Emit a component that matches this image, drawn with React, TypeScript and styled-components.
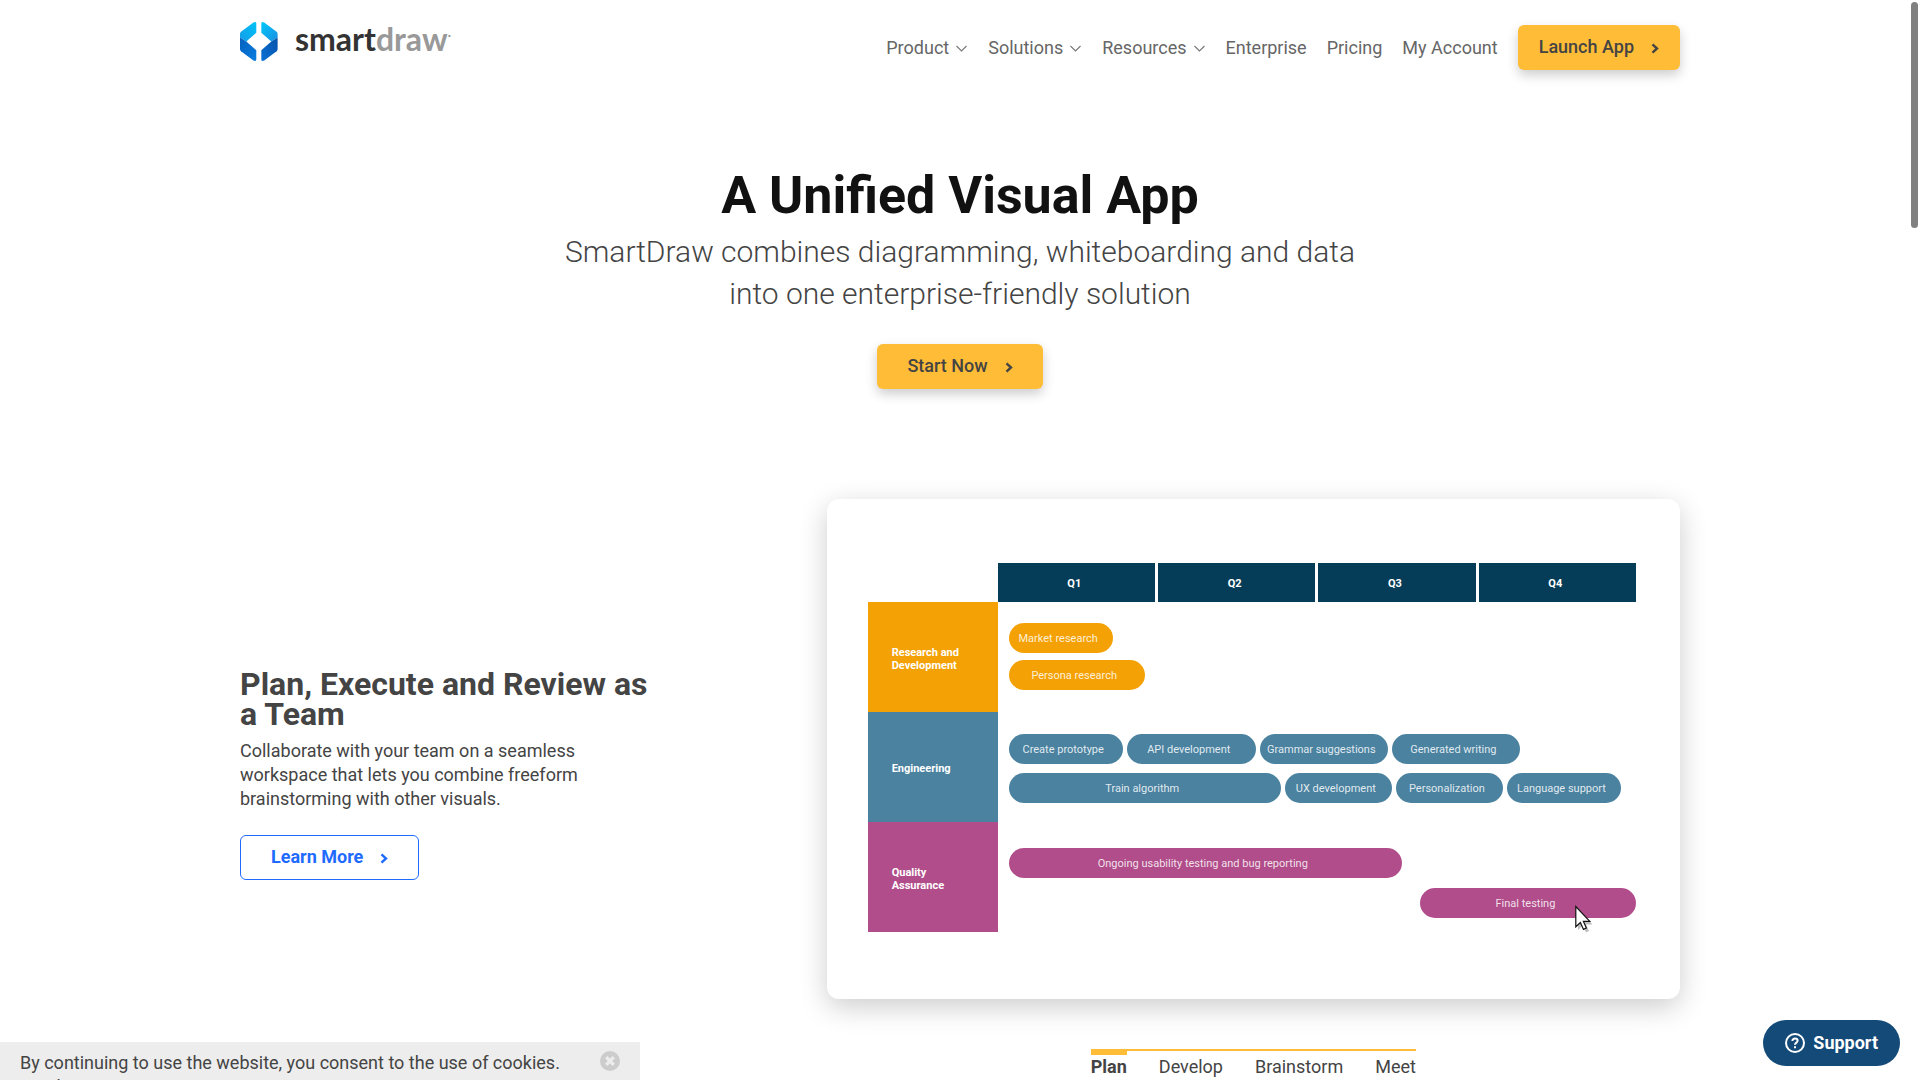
import React from "react";
import styled, { createGlobalStyle, css } from "styled-components";

const color = {
  ink: "#111111",
  text: "#444444",
  nav: "#666666",
  amber: "#ffbd37",
  link: "#1f6bff",
  navy: "#053d58",
  orange: "#f4a105",
  teal: "#4a82a0",
  plum: "#b14d8a",
};

const GlobalStyle = createGlobalStyle`
  *, *::before, *::after { box-sizing: border-box; }
  html { scrollbar-width: none; }
  body {
    margin: 0;
    background: #ffffff;
    color: ${color.text};
    font-family: Roboto, "Liberation Sans", sans-serif;
    font-size: 18px;
    line-height: 24px;
  }
  button { font: inherit; cursor: pointer; }
  h1, h2, p { margin: 0; }
`;

const Container = styled.div`
  width: 75%;
  min-width: 1200px;
  margin: 0 auto;
`;

const Header = styled.header`
  display: flex;
  justify-content: space-between;
  align-items: flex-start;
  padding-top: 22px;
`;

const LogoLink = styled.a`
  display: flex;
  align-items: flex-start;
  gap: 17px;
  text-decoration: none;
`;

const LogoMark = styled.svg`
  width: 38px;
  height: 39px;
`;

const Wordmark = styled.span`
  font-family: Lato, Roboto, sans-serif;
  font-size: 32px;
  font-weight: 700;
  line-height: 34px;
  color: #333333;
`;

const WordmarkLight = styled.span`
  color: #999999;
`;

const Trademark = styled.sup`
  font-size: 12px;
  line-height: 0;
  color: #999999;
`;

const Nav = styled.nav`
  display: flex;
  align-items: center;
  gap: 20px;
  padding-top: 3px;
`;

const NavItem = styled.a`
  display: flex;
  align-items: center;
  gap: 6px;
  color: ${color.nav};
  text-decoration: none;
`;

const Caret = styled.svg`
  width: 13px;
  height: 12px;
  fill: none;
  stroke: #777777;
  stroke-width: 1.1;
`;

const Arrow = styled.svg`
  width: 8px;
  height: 11px;
  margin-top: 3px;
  fill: none;
  stroke: currentColor;
  stroke-width: 2.4;
`;

const Button = styled.button<{ $variant?: "solid" | "outline"; $pad?: number }>`
  display: inline-flex;
  align-items: center;
  gap: 17px;
  height: 45px;
  padding: 0 ${(p) => p.$pad ?? 30}px;
  border-radius: 6px;
  ${(p) =>
    p.$variant === "outline"
      ? css`
          border: 1px solid ${color.link};
          background: #ffffff;
          color: ${color.link};
          font-weight: 700;
        `
      : css`
          padding-bottom: 2px;
          border: 0;
          background: ${color.amber};
          color: ${color.text};
          font-weight: 500;
          box-shadow: 0 5px 12px rgba(0, 0, 0, 0.2);
        `}
`;

const Hero = styled.section`
  display: flex;
  flex-direction: column;
  align-items: center;
  padding: 96px 0 110px;
  text-align: center;
`;

const Title = styled.h1`
  margin-bottom: 5px;
  font-size: 52px;
  font-weight: 700;
  line-height: 60px;
  color: ${color.ink};
`;

const Subtitle = styled.p`
  max-width: 820px;
  margin-bottom: 29px;
  font-size: 30px;
  font-weight: 300;
  line-height: 42px;
`;

const Feature = styled.section`
  display: grid;
  grid-template-columns: 11fr 16fr;
  align-items: center;
`;

const Copy = styled.div`
  display: flex;
  flex-direction: column;
  align-items: flex-start;
  max-width: 420px;
  padding-bottom: 30px;
`;

const CopyTitle = styled.h2`
  margin-bottom: 10px;
  font-size: 32px;
  font-weight: 700;
  line-height: 30px;
`;

const CopyText = styled.p`
  max-width: 360px;
  margin-bottom: 24px;
`;

const Showcase = styled.div`
  display: flex;
  flex-direction: column;
  align-items: center;
  gap: 50px;
`;

const Card = styled.div`
  width: 100%;
  padding: 64px 44px 67px 41px;
  border-radius: 12px;
  background: #ffffff;
  box-shadow: 0 8px 28px rgba(0, 0, 0, 0.2);
  font-size: 11px;
  line-height: 13px;
  color: #ffffff;
`;

const Quarters = styled.div`
  display: grid;
  grid-template-columns: repeat(4, 1fr);
  gap: 3px;
  padding-left: 130px;
`;

const Quarter = styled.div`
  padding: 14px 4px 12px 0;
  background: ${color.navy};
  font-weight: 700;
  text-align: center;
`;

const LaneBox = styled.div`
  display: grid;
  grid-template-columns: 130px 1fr;
  min-height: 110px;
`;

const LaneLabel = styled.div<{ $tone: string }>`
  display: flex;
  align-items: center;
  padding: 3px 36px 0 24px;
  background: ${(p) => p.$tone};
  font-weight: 700;
`;

const Track = styled.div<{ $top: number; $gap: number }>`
  display: flex;
  flex-direction: column;
  gap: ${(p) => p.$gap}px;
  padding: ${(p) => p.$top}px 0 0 11px;
`;

const TrackRow = styled.div<{ $units: number[] }>`
  display: grid;
  grid-template-columns: ${(p) => p.$units.map((u) => `minmax(0, ${u}fr)`).join(" ")};
  gap: 4px;
`;

const Pill = styled.div<{ $tone: string }>`
  position: relative;
  display: flex;
  align-items: center;
  justify-content: center;
  height: 30px;
  padding-right: 5px;
  border-radius: 15px;
  background: ${(p) => p.$tone};
  color: rgba(255, 255, 255, 0.85);
  white-space: nowrap;
`;

const Pointer = styled.svg`
  position: absolute;
  top: 17px;
  left: 72%;
  width: 18px;
  height: 28px;
  overflow: visible;
`;

const Tabs = styled.div`
  display: flex;
  gap: 32px;
  border-top: 2px solid ${color.amber};
`;

const Tab = styled.button<{ $active: boolean }>`
  padding: 0;
  border: 0;
  border-top: 4px solid ${(p) => (p.$active ? color.amber : "transparent")};
  background: none;
  color: ${color.text};
  font-weight: ${(p) => (p.$active ? 700 : 400)};
`;

const CookieBar = styled.aside`
  position: fixed;
  bottom: 0;
  left: 0;
  display: flex;
  justify-content: space-between;
  align-items: flex-start;
  width: 640px;
  height: 38px;
  padding: 9px 20px 0;
  overflow: hidden;
  background: #ededed;
`;

const CookieLink = styled.a`
  display: block;
  color: ${color.text};
  text-decoration: none;
`;

const CloseButton = styled.button`
  display: flex;
  padding: 0;
  border: 0;
  background: none;
`;

const CloseIcon = styled.svg`
  width: 20px;
  height: 20px;
`;

const SupportButton = styled.button`
  position: fixed;
  right: 20px;
  bottom: 14px;
  display: flex;
  align-items: center;
  gap: 8px;
  height: 46px;
  padding: 0 22px;
  border: 0;
  border-radius: 23px;
  background: #144a78;
  color: #ffffff;
  font-weight: 700;
`;

const SupportIcon = styled.svg`
  width: 20px;
  height: 20px;
  fill: none;
  stroke: #ffffff;
  stroke-width: 2;
`;

const ScrollThumb = styled.div`
  position: fixed;
  top: 2px;
  right: 2px;
  width: 7px;
  height: 226px;
  border-radius: 4px;
  background: #808080;
`;

const navItems = [
  { label: "Product", menu: true },
  { label: "Solutions", menu: true },
  { label: "Resources", menu: true },
  { label: "Enterprise" },
  { label: "Pricing" },
  { label: "My Account" },
];

type Task = { name?: string; units: number; pointer?: boolean };
type Lane = { name: string; tone: string; top: number; gap: number; rows: Task[][] };

/* Task lengths are shares of one year; entries without a name are idle time. */
const lanes: Lane[] = [
  {
    name: "Research and Development",
    tone: color.orange,
    top: 21,
    gap: 7,
    rows: [
      [{ name: "Market research", units: 104 }, { units: 519 }],
      [{ name: "Persona research", units: 136 }, { units: 487 }],
    ],
  },
  {
    name: "Engineering",
    tone: color.teal,
    top: 22,
    gap: 9,
    rows: [
      [
        { name: "Create prototype", units: 114 },
        { name: "API development", units: 129 },
        { name: "Grammar suggestions", units: 128 },
        { name: "Generated writing", units: 128 },
        { units: 112 },
      ],
      [
        { name: "Train algorithm", units: 272 },
        { name: "UX development", units: 107 },
        { name: "Personalization", units: 107 },
        { name: "Language support", units: 114 },
        { units: 11 },
      ],
    ],
  },
  {
    name: "Quality Assurance",
    tone: color.plum,
    top: 26,
    gap: 10,
    rows: [
      [{ name: "Ongoing usability testing and bug reporting", units: 393 }, { units: 230 }],
      [{ units: 407 }, { name: "Final testing", units: 216, pointer: true }],
    ],
  },
];

const ArrowIcon = () => (
  <Arrow viewBox="0 0 8 11" aria-hidden="true">
    <path d="M1.5 1.3 6 5.5 1.5 9.7" />
  </Arrow>
);

const Logo = () => (
  <LogoLink href="#" aria-label="SmartDraw home">
    <LogoMark viewBox="0 0 38 39" aria-hidden="true">
      <defs>
        <linearGradient id="sky" x1="0" y1="1" x2="1" y2="0">
          <stop offset="0" stopColor="#159be8" />
          <stop offset="1" stopColor="#00c3f7" />
        </linearGradient>
        <linearGradient id="skyRight" x1="0" y1="0" x2="1" y2="1">
          <stop offset="0" stopColor="#00c8fa" />
          <stop offset="1" stopColor="#1a8de0" />
        </linearGradient>
        <linearGradient id="deep" x1="0" y1="0" x2="1" y2="1">
          <stop offset="0" stopColor="#0560bd" />
          <stop offset="1" stopColor="#0a7ee0" />
        </linearGradient>
        <linearGradient id="deepRight" x1="1" y1="0" x2="0" y2="1">
          <stop offset="0" stopColor="#0852a8" />
          <stop offset="1" stopColor="#0871d6" />
        </linearGradient>
      </defs>
      <path fill="url(#sky)" d="M0 12Q0 10.6 1 9.8L13.4.5Q16.3-.8 16.3 1.5V10.8L6.3 19.5 0 15.6Z" />
      <path fill="url(#deep)" d="M0 15.6 6.3 19.5 16.3 28.2V37.5Q16.3 39.8 13.4 38.5L1 29.2Q0 28.4 0 27Z" />
      <path fill="url(#skyRight)" d="M37.6 12Q37.6 10.6 36.6 9.8L24.2.5Q21.3-.8 21.3 1.5V10.8L31.3 19.5 37.6 15.6Z" />
      <path fill="url(#deepRight)" d="M37.6 15.6 31.3 19.5 21.3 28.2V37.5Q21.3 39.8 24.2 38.5L36.6 29.2Q37.6 28.4 37.6 27Z" />
    </LogoMark>
    <Wordmark>
      smart<WordmarkLight>draw</WordmarkLight>
      <Trademark>·</Trademark>
    </Wordmark>
  </LogoLink>
);

const RoadMap = () => (
  <Card>
    <Quarters>
      {["Q1", "Q2", "Q3", "Q4"].map((q) => (
        <Quarter key={q}>{q}</Quarter>
      ))}
    </Quarters>
    {lanes.map((lane) => (
      <LaneBox key={lane.name}>
        <LaneLabel $tone={lane.tone}>{lane.name}</LaneLabel>
        <Track $top={lane.top} $gap={lane.gap}>
          {lane.rows.map((row, r) => (
            <TrackRow key={r} $units={row.map((task) => task.units)}>
              {row.map((task, i) =>
                task.name ? (
                  <Pill key={i} $tone={lane.tone}>
                    {task.name}
                    {task.pointer && (
                      <Pointer viewBox="0 0 18 28" aria-hidden="true">
                        <path
                          d="M3 4V25L7.8 20.5 11 27.5 14 26 11 19.5H17.5Z"
                          fill="#000000"
                          opacity="0.25"
                        />
                        <path
                          d="M.8 1.5V21.8L5.4 17.6 8.5 24.4 11.4 23 8.4 16.4H14.8Z"
                          fill="#ffffff"
                          stroke="#111111"
                          strokeWidth="1.2"
                        />
                      </Pointer>
                    )}
                  </Pill>
                ) : (
                  <span key={i} />
                )
              )}
            </TrackRow>
          ))}
        </Track>
      </LaneBox>
    ))}
  </Card>
);

export default function App() {
  const [tab, setTab] = React.useState("Plan");
  return (
    <>
      <GlobalStyle />
      <Container>
        <Header>
          <Logo />
          <Nav>
            {navItems.map((item) => (
              <NavItem key={item.label} href="#">
                {item.label}
                {item.menu && (
                  <Caret viewBox="0 0 13 12" aria-hidden="true">
                    <path d="M1.5 4 6.5 9 11.5 4" />
                  </Caret>
                )}
              </NavItem>
            ))}
            <Button $pad={21}>
              Launch App
              <ArrowIcon />
            </Button>
          </Nav>
        </Header>
        <main>
          <Hero>
            <Title>A Unified Visual App</Title>
            <Subtitle>
              SmartDraw combines diagramming, whiteboarding and data into one enterprise-friendly
              solution
            </Subtitle>
            <Button>
              Start Now
              <ArrowIcon />
            </Button>
          </Hero>
          <Feature>
            <Copy>
              <CopyTitle>Plan, Execute and Review as a Team</CopyTitle>
              <CopyText>
                Collaborate with your team on a seamless workspace that lets you combine freeform
                brainstorming with other visuals.
              </CopyText>
              <Button $variant="outline">
                Learn More
                <ArrowIcon />
              </Button>
            </Copy>
            <Showcase>
              <RoadMap />
              <Tabs role="tablist">
                {["Plan", "Develop", "Brainstorm", "Meet"].map((name) => (
                  <Tab
                    key={name}
                    role="tab"
                    aria-selected={name === tab}
                    $active={name === tab}
                    onClick={() => setTab(name)}
                  >
                    {name}
                  </Tab>
                ))}
              </Tabs>
            </Showcase>
          </Feature>
        </main>
      </Container>
      <CookieBar>
        <p>
          By continuing to use the website, you consent to the use of cookies.
          <CookieLink href="#">Read More</CookieLink>
        </p>
        <CloseButton aria-label="Close">
          <CloseIcon viewBox="0 0 20 20" aria-hidden="true">
            <circle cx="10" cy="10" r="10" fill="#cccccc" />
            <path d="M6.2 6.2 13.8 13.8M13.8 6.2 6.2 13.8" stroke="#ededed" strokeWidth="3.2" />
          </CloseIcon>
        </CloseButton>
      </CookieBar>
      <SupportButton>
        <SupportIcon viewBox="0 0 20 20" aria-hidden="true">
          <circle cx="10" cy="10" r="9" />
          <path d="M7.4 7.9C7.4 6.4 8.5 5.5 10 5.5S12.6 6.4 12.6 7.8C12.6 9.6 10 9.7 10 11.8" />
          <path d="M10 13.3V15.3" />
        </SupportIcon>
        Support
      </SupportButton>
      <ScrollThumb />
    </>
  );
}
